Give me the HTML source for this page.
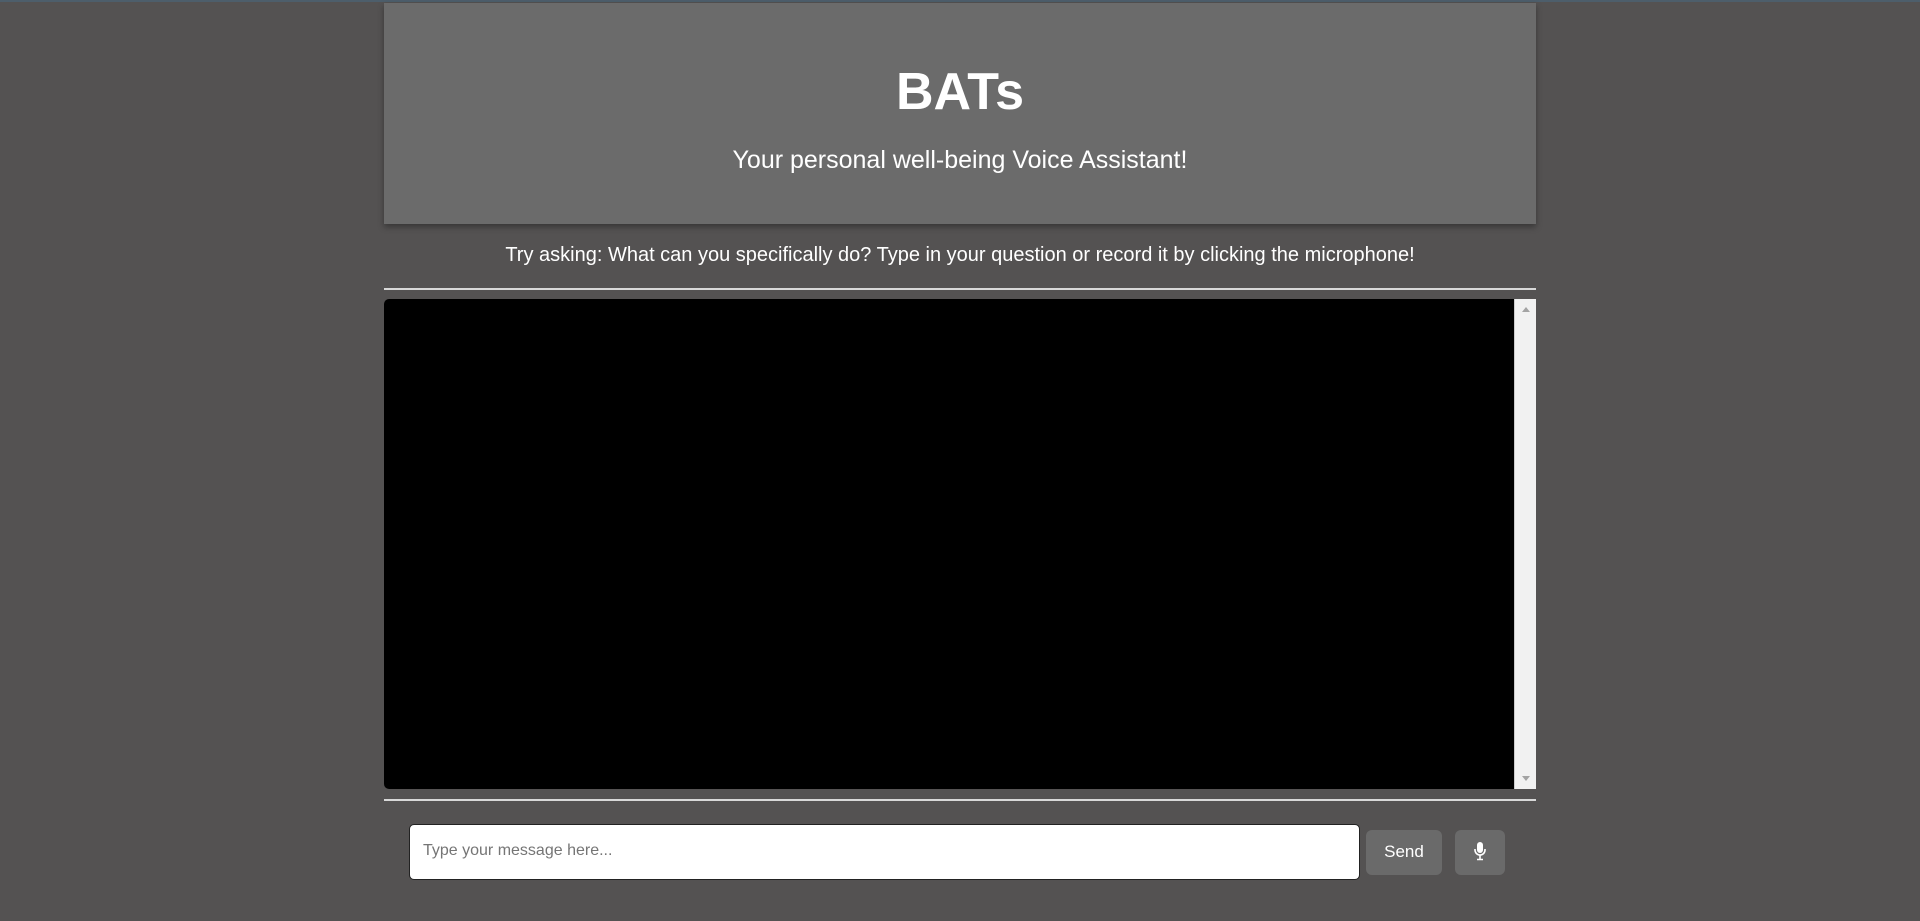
<!DOCTYPE html>
<html><head><style>
body{margin:0;background:#545252;font-family:"Liberation Sans",Arial,sans-serif;width:1920px;height:921px;overflow:hidden;position:relative;border-top:2px solid #4d5e6b;box-sizing:border-box}
.hd{position:absolute;left:384px;top:1px;width:1152px;height:221px;background:#6b6b6b;box-shadow:0 3px 6px rgba(0,0,0,.35);color:#fff;text-align:center}
.hd h1{margin:0;position:absolute;top:59px;width:100%;font-size:52px;font-weight:bold}
.hd p{margin:0;position:absolute;top:143px;width:100%;font-size:25px}
.hint{position:absolute;top:242px;left:384px;width:1152px;text-align:center;color:#fff;font-size:20px}
.hr{position:absolute;left:384px;width:1152px;height:2px;background:#d8d8d8}
.chat{position:absolute;left:384px;top:297px;width:1152px;height:490px;background:#000;border-radius:5px 0 0 5px}
.sb{position:absolute;right:0;top:0;width:21px;height:100%;background:#f1f1f1;border-left:1px solid #ccc}
.sb:before{content:"";position:absolute;left:7px;top:8px;border:4px solid transparent;border-bottom:5px solid #a3a3a3;border-top:0}
.sb:after{content:"";position:absolute;left:7px;bottom:8px;border:4px solid transparent;border-top:5px solid #a3a3a3;border-bottom:0}
.in{position:absolute;left:409px;top:822px;width:951px;height:56px;background:#fff;border:1px solid #222;border-radius:5px;box-sizing:border-box;font-size:16px;color:#757575;padding:17px 13px}
.btn{position:absolute;top:828px;height:45px;background:#6a6a6a;border-radius:6px;color:#fff;font-size:17px;text-align:center;line-height:43px}
</style></head><body>
<div class="hd"><h1>BATs</h1><p>Your personal well-being Voice Assistant!</p></div>
<div class="hint">Try asking: What can you specifically do? Type in your question or record it by clicking the microphone!</div>
<div class="hr" style="top:286px"></div>
<div class="chat"><div class="sb"></div></div>
<div class="hr" style="top:797px"></div>
<div class="in">Type your message here...</div>
<div class="btn" style="left:1366px;width:76px">Send</div>
<div class="btn" style="left:1455px;width:50px"><svg width="14" height="20" viewBox="0 0 14 20" style="margin-top:11px"><rect x="4" y="1" width="6" height="11" rx="3" fill="#fff"/><path d="M2 8v1a5 5 0 0 0 10 0V8" stroke="#fff" stroke-width="1.6" fill="none"/><path d="M7 14v4M4 18.5h6" stroke="#fff" stroke-width="1.6"/></svg></div>
</body></html>
